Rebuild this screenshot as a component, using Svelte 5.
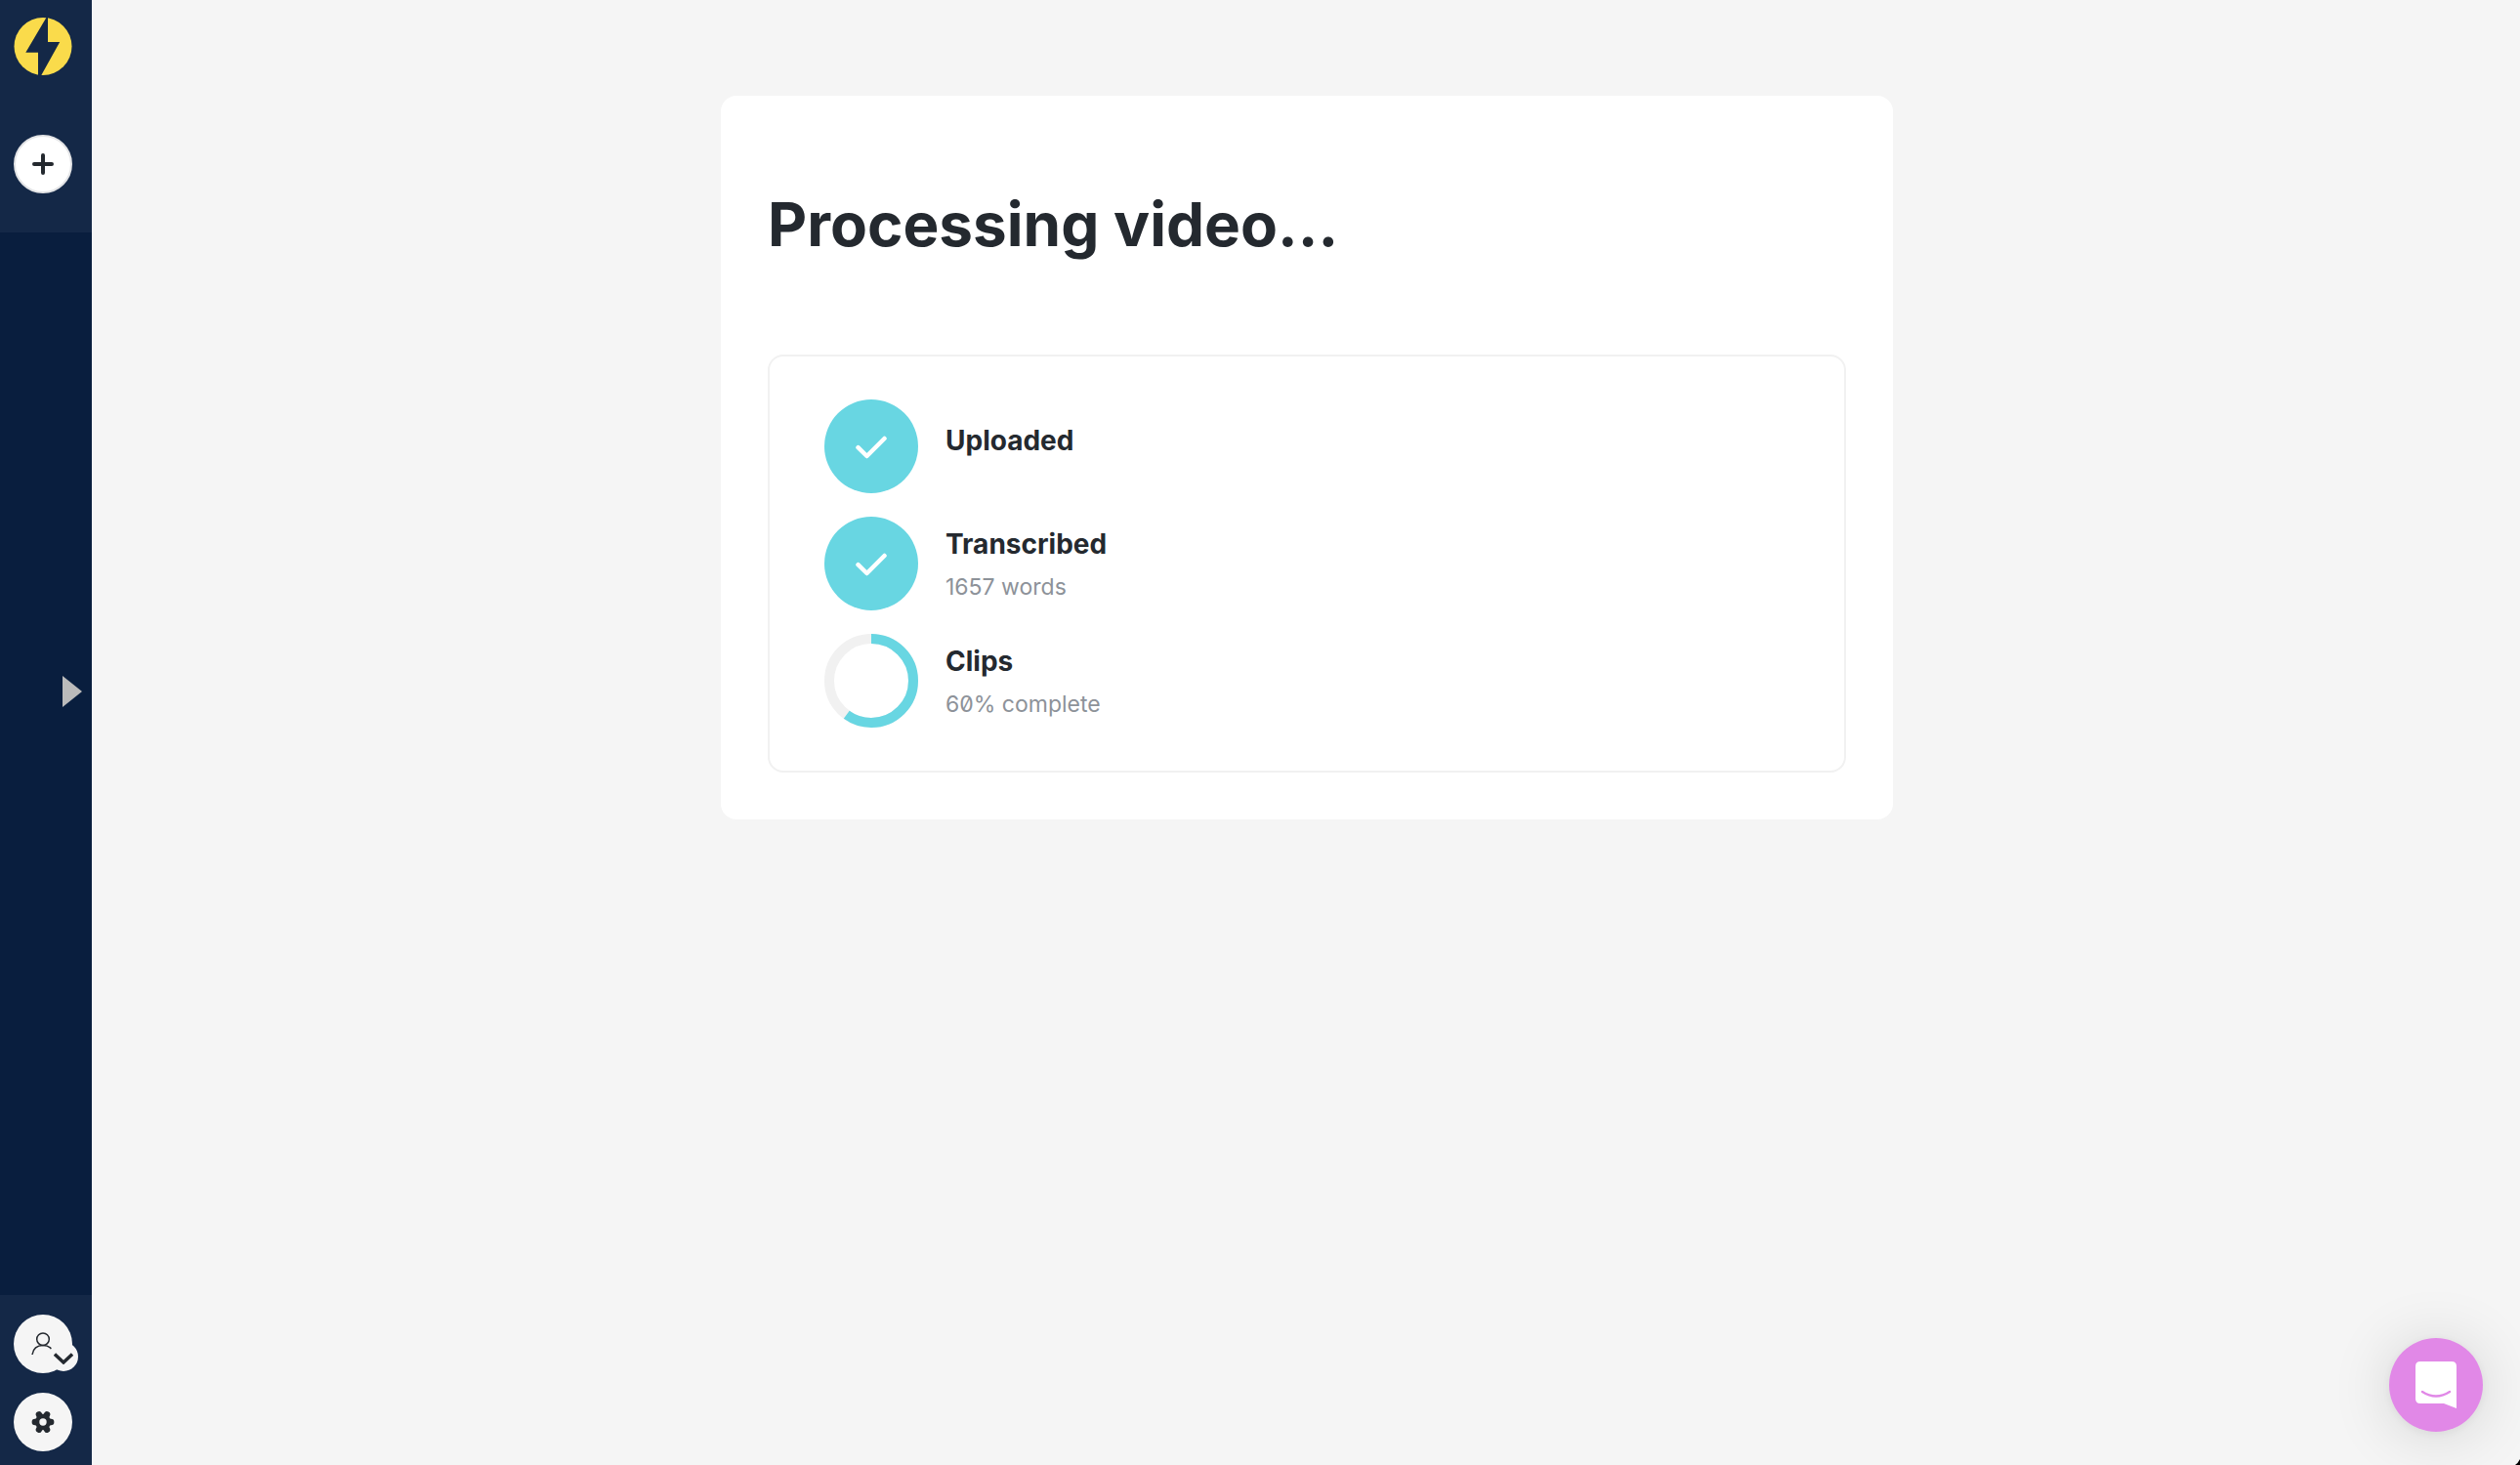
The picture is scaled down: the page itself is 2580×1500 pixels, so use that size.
<script lang="ts">
  type Step = { title: string; detail?: string; percent: number };

  const steps: Step[] = [
    { title: 'Uploaded', percent: 100 },
    { title: 'Transcribed', detail: '1657 words', percent: 100 },
    { title: 'Clips', detail: '60% complete', percent: 60 }
  ];
</script>

<div class="app">
  <nav class="sidebar" aria-label="Main">
    <div class="group top">
      <a class="logo" href="#home" aria-label="Home">
        <svg viewBox="0 0 60 60" aria-hidden="true">
          <circle cx="30" cy="29.5" r="29.5" fill="#fadb4b" />
          <path d="M34 -1 12.3 35.8H25V61H27.2L47.2 25H35V-1Z" fill="#142847" />
        </svg>
      </a>
      <button class="round add" aria-label="New project">
        <svg width="24" height="24" viewBox="0 0 24 24" aria-hidden="true">
          <path d="M12 3V21M3 12H21" stroke="#24292f" stroke-width="4" stroke-linecap="round" />
        </svg>
      </button>
    </div>

    <div class="middle">
      <button class="expand" aria-label="Expand sidebar">
        <svg width="20" height="32" viewBox="0 0 20 32" aria-hidden="true">
          <path d="M0 0 20 16 0 32Z" fill="#bbb" />
        </svg>
      </button>
    </div>

    <div class="group bottom">
      <button class="round account" aria-label="Account">
        <svg width="24" height="24" viewBox="0 0 24 24" fill="none" stroke="#24292f" stroke-width="1.5" aria-hidden="true">
          <circle cx="12" cy="7.2" r="6.3" />
          <path d="M1 23C2 17 6 13.6 12 13.6S22 17 23 23" />
        </svg>
        <span class="badge">
          <svg width="20" height="12" viewBox="0 0 20 12" fill="none" aria-hidden="true">
            <path d="M1 1.5 10 10 19 1.5" stroke="#24292f" stroke-width="3.4" />
          </svg>
        </span>
      </button>
      <button class="round" aria-label="Settings">
        <svg width="24" height="24" viewBox="0 0 24 24" aria-hidden="true">
          <g stroke="#24292f" stroke-width="6.4" stroke-linecap="round">
            <path d="M3.8 12H20.2M7.9 4.3 16.1 19.7M16.1 4.3 7.9 19.7" />
          </g>
          <circle cx="12" cy="12" r="8.2" fill="#24292f" />
          <circle cx="12" cy="12" r="3.7" fill="#f5f5f5" />
        </svg>
      </button>
    </div>
  </nav>

  <main>
    <section class="card">
      <h1>Processing video...</h1>
      <ul class="steps">
        {#each steps as step}
          <li>
            {#if step.percent === 100}
              <span class="done">
                <svg width="34" height="26" viewBox="0 0 34 26" fill="none" aria-hidden="true">
                  <path d="M3.5 14.2 12.5 23 30.5 5" stroke="#fff" stroke-width="4.5" stroke-linecap="round" stroke-linejoin="round" />
                </svg>
              </span>
            {:else}
              <svg class="ring" viewBox="0 0 96 96" fill="none" role="img" aria-label="{step.percent}%">
                <circle cx="48" cy="48" r="43" stroke="#f1f1f1" stroke-width="10" />
                <circle
                  cx="48"
                  cy="48"
                  r="43"
                  stroke="#68d6e2"
                  stroke-width="10"
                  pathLength="100"
                  stroke-dasharray="{step.percent} 100"
                  transform="rotate(-90 48 48)"
                />
              </svg>
            {/if}
            <div class="text" class:detailed={step.detail}>
              <h2>{step.title}</h2>
              {#if step.detail}<p>{step.detail}</p>{/if}
            </div>
          </li>
        {/each}
      </ul>
    </section>
  </main>

  <button class="chat" aria-label="Open chat">
    <svg width="42" height="48" viewBox="0 0 42 48" aria-hidden="true">
      <path d="M5 0H37Q42 0 42 5V48L29 43H5Q0 43 0 38V5Q0 0 5 0Z" fill="#fff" />
      <path d="M7 31Q21 40 35 31" fill="none" stroke="#e188e7" stroke-width="2.4" stroke-linecap="round" />
    </svg>
  </button>
  <svg class="corner" width="5" height="6" viewBox="0 0 5 6" aria-hidden="true">
    <path d="M5 0V6H0Q3 4 5 0Z" fill="#000" />
  </svg>
</div>

<style>
  :global(body) {
    margin: 0;
    background: #f5f5f5;
  }

  .app {
    display: flex;
    min-height: 100vh;
    font-family: Inter, 'Open Sans', sans-serif;
    color: #24292f;
  }

  button {
    padding: 0;
    border: 0;
    background: none;
    cursor: pointer;
  }

  svg {
    display: block;
  }

  .sidebar {
    display: flex;
    flex: none;
    flex-direction: column;
    width: 94px;
    border-right: 2px solid #f5f5f5;
    background: #091e3e;
  }

  .group {
    display: flex;
    flex-direction: column;
    padding: 18px 14px 40px;
    background: #142847;
  }

  .top {
    gap: 60px;
  }

  .bottom {
    gap: 20px;
    padding: 20px 14px 14px;
  }

  .logo,
  .logo svg {
    width: 60px;
    height: 60px;
  }

  .round {
    position: relative;
    display: grid;
    place-items: center;
    width: 60px;
    height: 60px;
    border-radius: 50%;
    background: #f5f5f5;
  }

  .add {
    border: 2px solid #e3e4e6;
    background: #fff;
  }

  .badge {
    position: absolute;
    right: -6px;
    bottom: 2px;
    display: grid;
    place-items: end center;
    box-sizing: border-box;
    width: 30px;
    height: 30px;
    padding-bottom: 7px;
    border-radius: 50%;
    background: #f5f5f5;
  }

  .middle {
    display: flex;
    flex: 1;
    align-items: flex-start;
    justify-content: flex-end;
    padding: 454px 10px 0 0;
  }

  main {
    flex: 1;
    padding: 98px 24px;
  }

  .card {
    box-sizing: border-box;
    max-width: 1200px;
    margin: 0 auto;
    padding: 88px 48px 48px;
    border-radius: 16px;
    background: #fff;
  }

  h1 {
    margin: 0 0 89px;
    font-size: 62px;
    font-weight: 700;
    line-height: 88px;
  }

  .steps {
    display: flex;
    flex-direction: column;
    gap: 24px;
    margin: 0;
    padding: 44px 56px;
    border: 2px solid #f1f1f1;
    border-radius: 16px;
    list-style: none;
  }

  li {
    display: flex;
    align-items: center;
    gap: 28px;
  }

  .done,
  .ring {
    flex: none;
    width: 96px;
    height: 96px;
  }

  .done {
    display: grid;
    place-items: center;
    border-radius: 50%;
    background: #68d6e2;
  }

  .text {
    display: flex;
    flex-direction: column;
    gap: 8px;
    padding-bottom: 12px;
  }

  .text.detailed {
    padding: 4px 0 0;
  }

  h2 {
    margin: 0;
    font-size: 28px;
    font-weight: 700;
    line-height: 36px;
  }

  p {
    margin: 0;
    font-size: 23px;
    line-height: 36px;
    font-variant-numeric: slashed-zero;
    color: #8d9299;
  }

  .chat {
    position: fixed;
    right: 38px;
    bottom: 34px;
    display: grid;
    place-items: center;
    width: 96px;
    height: 96px;
    border-radius: 50%;
    background: #e188e7;
    box-shadow: 0 2px 12px rgb(0 0 0 / 6%), 0 4px 64px rgb(0 0 0 / 14%);
  }

  .corner {
    position: fixed;
    right: 0;
    bottom: 0;
  }
</style>
